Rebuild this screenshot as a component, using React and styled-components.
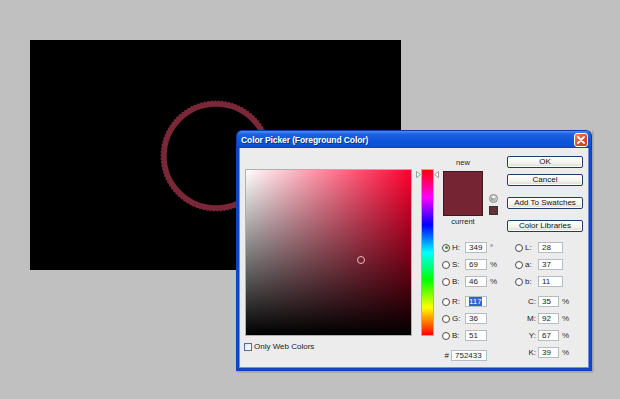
import styled, { createGlobalStyle } from 'styled-components';

const GlobalStyle = createGlobalStyle`
  *, *::before, *::after { box-sizing: border-box; }
  html, body { margin: 0; padding: 0; }
  body {
    background: #c0c0c0;
    font-family: "Liberation Sans", Arial, sans-serif;
  }
`;

const Desktop = styled.div`
  position: relative;
  width: 620px;
  height: 399px;
  overflow: hidden;
  background: #c0c0c0;
`;

const Canvas = styled.div`
  position: absolute;
  left: 30px;
  top: 40px;
  width: 371px;
  height: 230px;
  background: #000;

  svg { display: block; }
`;

const Dialog = styled.div`
  position: absolute;
  left: 236px;
  top: 130px;
  width: 356px;
  display: flex;
  flex-direction: column;
  box-shadow: 1px 1px 2px rgba(0, 0, 0, 0.25);
`;

const TitleBar = styled.div`
  height: 18px;
  display: flex;
  align-items: center;
  justify-content: space-between;
  padding: 0 3px 0 4px;
  border-radius: 6px 6px 0 0;
  background: linear-gradient(to bottom, #4a90f0 0%, #1f62e0 18%, #0d55dc 55%, #0a52d6 85%, #0843b8 100%);
  border: 1px solid #0a3aa8;
  border-bottom: none;
`;

const Title = styled.span`
  color: #fff;
  font-size: 8.5px;
  font-weight: 700;
  letter-spacing: -0.1px;
  text-shadow: 1px 1px 0 #0a2f8a;
`;

const CloseButton = styled.div`
  width: 14px;
  height: 14px;
  border: 1px solid #fff;
  border-radius: 3px;
  background: linear-gradient(135deg, #f08a68 0%, #e0562c 45%, #c63c14 100%);
  display: flex;
  align-items: center;
  justify-content: center;
`;

const Body = styled.div`
  height: 223px;
  display: flex;
  padding: 8px 6px 0 6px;
  background: #ececec;
  border: 3px solid #1042cc;
  border-top: none;
  box-shadow: inset 1px 0 0 #6f8fe8, inset -1px 0 0 #6f8fe8, inset 0 -1px 0 #6f8fe8;
  font-size: 8px;
  color: #000;
`;

const LeftCol = styled.div`
  margin-top: 13px;
  display: flex;
  flex-direction: column;
`;

const Field = styled.div`
  position: relative;
  width: 167px;
  height: 167px;
  border: 1px solid #b0b0b0;
  background:
    linear-gradient(to top, #000, rgba(0, 0, 0, 0)),
    linear-gradient(to right, #fff, ${p => `hsl(${p.$hue}, 100%, 50%)`});
`;

const FieldMarker = styled.div`
  position: absolute;
  left: ${p => p.$x}px;
  top: ${p => p.$y}px;
  width: 8px;
  height: 8px;
  margin: -4px 0 0 -4px;
  border: 1px solid #f0b8c4;
  border-radius: 50%;
`;

const CheckRow = styled.label`
  margin-top: 7px;
  margin-left: -1px;
  display: flex;
  align-items: center;
  gap: 2px;
  height: 8px;
  line-height: 8px;
  color: #222;
`;

const CheckBox = styled.span`
  width: 8px;
  height: 8px;
  border: 1px solid #4d6f9a;
  background: linear-gradient(135deg, #dfe3ea, #fff);
`;

const HueCol = styled.div`
  position: relative;
  margin: 13px 0 0 4px;
  width: 22px;
  height: 167px;
`;

const HueSlider = styled.div`
  margin-left: 5px;
  width: 13px;
  height: 167px;
  border: 1px solid #b0b0b0;
  background: linear-gradient(to bottom, #f00 0%, #f0f 16.67%, #00f 33.33%, #0ff 50%, #0f0 66.67%, #ff0 83.33%, #f00 100%);
`;

const HueArrow = styled.svg`
  position: absolute;
  top: ${p => p.$y - 3}px;
  ${p => (p.$side === 'left' ? 'left: 0;' : 'right: -1px;')}
`;

const RightArea = styled.div`
  flex: 1;
  margin-left: 4px;
  display: flex;
  flex-direction: column;
`;

const TopRow = styled.div`
  display: flex;
  justify-content: space-between;
`;

const SwatchBlock = styled.div`
  display: flex;
  flex-direction: column;
  margin-top: 2px;
  padding-left: 1px;
`;

const SwatchLabel = styled.div`
  width: 40px;
  text-align: center;
  font-size: 7.5px;
  line-height: 10px;
  color: #222;
`;

const SwatchRow = styled.div`
  display: flex;
  gap: 6px;
  margin: 3px 0 1px;
`;

const Swatch = styled.div`
  width: 40px;
  height: 45px;
  border: 1px solid #3a1a20;
  display: flex;
  flex-direction: column;
`;

const SwatchHalf = styled.div`
  flex: 1;
  background: ${p => p.$color};
`;

const SideIcons = styled.div`
  display: flex;
  flex-direction: column;
  justify-content: flex-end;
  gap: 3px;
  padding-bottom: 1px;
`;

const WebSwatch = styled.div`
  width: 9px;
  height: 9px;
  border: 1px solid #333;
  background: ${p => p.$color};
`;

const ButtonCol = styled.div`
  width: 76px;
  display: flex;
  flex-direction: column;
`;

const Button = styled.button`
  height: 12px;
  margin: ${p => p.$gap}px 0 0;
  padding: 0;
  border: 1px solid #1d3c6e;
  border-radius: 2px;
  background: linear-gradient(to bottom, #ffffff 0%, #f4f3ee 60%, #dcd8cc 100%);
  box-shadow: inset 0 0 0 1px #fff;
  font-family: "Liberation Sans", Arial, sans-serif;
  font-size: 8px;
  line-height: 10px;
  color: #111;
`;

const Fields = styled.div`
  margin-top: 10px;
  display: grid;
  grid-template-columns: 73px 1fr;
`;

const FieldCol = styled.div`
  display: flex;
  flex-direction: column;
`;

const Row = styled.div`
  display: flex;
  align-items: center;
  height: 11px;
  margin-top: ${p => p.$gap}px;
`;

const Radio = styled.span`
  position: relative;
  width: 8px;
  height: 8px;
  margin-right: 2px;
  border: 1px solid #4a4a4a;
  border-radius: 50%;
  background: #fff;

  ${p => p.$checked && `
    &::after {
      content: '';
      position: absolute;
      left: 1.5px;
      top: 1.5px;
      width: 3px;
      height: 3px;
      border-radius: 50%;
      background: #2a9d2a;
    }
  `}
`;

const Label = styled.span`
  width: ${p => p.$w}px;
  text-align: ${p => p.$align || 'left'};
  padding-right: ${p => (p.$align === 'right' ? 2 : 0)}px;
  color: #222;
`;

const Input = styled.div`
  width: ${p => p.$w}px;
  height: 11px;
  padding-left: 3px;
  border: 1px solid #b4bcc6;
  background: #fff;
  line-height: 9px;
  color: #222;
`;

const Selected = styled.span`
  background: #3164c5;
  color: #fff;
`;

const Unit = styled.span`
  margin-left: 3px;
  color: #333;
`;

const hsb = [
  { key: 'H', value: '349', unit: '°', checked: true },
  { key: 'S', value: '69', unit: '%' },
  { key: 'B', value: '46', unit: '%' },
];
const rgb = [
  { key: 'R', value: '117', selected: true },
  { key: 'G', value: '36' },
  { key: 'B', value: '51' },
];
const lab = [
  { key: 'L', value: '28' },
  { key: 'a', value: '37' },
  { key: 'b', value: '11' },
];
const cmyk = [
  { key: 'C', value: '35' },
  { key: 'M', value: '92' },
  { key: 'Y', value: '67' },
  { key: 'K', value: '39' },
];

const color = '#752433';
const hue = 349;
const sat = 69;
const bri = 46;
const size = 167;

const Ring = () => (
  <svg width="371" height="230" viewBox="0 0 371 230">
    <circle cx="186" cy="116" r="52" fill="none" stroke="#7a2838" strokeWidth="5.4" />
    <circle cx="186" cy="116" r="54.5" fill="none" stroke="#7a2838" strokeWidth="2.2"
      strokeDasharray="0.1 3.4" strokeLinecap="round" />
  </svg>
);

const Arrow = ({ side, y }) => (
  <HueArrow $side={side} $y={y} width="5" height="7" viewBox="0 0 5 7">
    {side === 'left'
      ? <path d="M0.5 0.5 L4.5 3.5 L0.5 6.5 Z" fill="#fff" stroke="#9a9a9a" strokeWidth="1" />
      : <path d="M4.5 0.5 L0.5 3.5 L4.5 6.5 Z" fill="#fff" stroke="#9a9a9a" strokeWidth="1" />}
  </HueArrow>
);

const Cube = () => (
  <svg width="9" height="9" viewBox="0 0 9 9">
    <circle cx="4.5" cy="4.5" r="4" fill="#cfcfcf" stroke="#8a8a8a" strokeWidth="1" />
    <path d="M4.5 1.8 L7 3.2 L4.5 4.6 L2 3.2 Z" fill="#f4f4f4" />
    <path d="M2 3.2 L4.5 4.6 L4.5 7.3 L2 5.9 Z" fill="#9b9b9b" />
    <path d="M7 3.2 L4.5 4.6 L4.5 7.3 L7 5.9 Z" fill="#b8b8b8" />
  </svg>
);

export default function App() {
  return (
    <Desktop>
      <GlobalStyle />
      <Canvas>
        <Ring />
      </Canvas>

      <Dialog>
        <TitleBar>
          <Title>Color Picker (Foreground Color)</Title>
          <CloseButton>
            <svg width="8" height="8" viewBox="0 0 8 8">
              <path d="M1 1 L7 7 M7 1 L1 7" stroke="#fff" strokeWidth="1.8" strokeLinecap="round" />
            </svg>
          </CloseButton>
        </TitleBar>

        <Body>
          <LeftCol>
            <Field $hue={hue}>
              <FieldMarker $x={(sat / 100) * size} $y={(1 - bri / 100) * size} />
            </Field>
            <CheckRow>
              <CheckBox />
              Only Web Colors
            </CheckRow>
          </LeftCol>

          <HueCol>
            <Arrow side="left" y={(1 - hue / 360) * size} />
            <HueSlider />
            <Arrow side="right" y={(1 - hue / 360) * size} />
          </HueCol>

          <RightArea>
            <TopRow>
              <SwatchBlock>
                <SwatchLabel>new</SwatchLabel>
                <SwatchRow>
                  <Swatch>
                    <SwatchHalf $color={color} />
                    <SwatchHalf $color={color} />
                  </Swatch>
                  <SideIcons>
                    <Cube />
                    <WebSwatch $color="#663333" />
                  </SideIcons>
                </SwatchRow>
                <SwatchLabel>current</SwatchLabel>
              </SwatchBlock>

              <ButtonCol>
                <Button $gap={0}>OK</Button>
                <Button $gap={6}>Cancel</Button>
                <Button $gap={11}>Add To Swatches</Button>
                <Button $gap={11}>Color Libraries</Button>
              </ButtonCol>
            </TopRow>

            <Fields>
              <FieldCol>
                {hsb.map((f, i) => (
                  <Row key={f.key} $gap={i === 0 ? 0 : 6}>
                    <Radio $checked={f.checked} />
                    <Label $w={13}>{f.key}:</Label>
                    <Input $w={22}>{f.value}</Input>
                    <Unit>{f.unit}</Unit>
                  </Row>
                ))}
                {rgb.map((f, i) => (
                  <Row key={f.key} $gap={i === 0 ? 9 : 6}>
                    <Radio />
                    <Label $w={13}>{f.key}:</Label>
                    <Input $w={22}>
                      {f.selected ? <Selected>{f.value}</Selected> : f.value}
                    </Input>
                  </Row>
                ))}
                <Row $gap={9}>
                  <Label $w={9} $align="right">#</Label>
                  <Input $w={36}>752433</Input>
                </Row>
              </FieldCol>

              <FieldCol>
                {lab.map((f, i) => (
                  <Row key={f.key} $gap={i === 0 ? 0 : 6}>
                    <Radio />
                    <Label $w={13}>{f.key}:</Label>
                    <Input $w={25}>{f.value}</Input>
                  </Row>
                ))}
                {cmyk.map((f, i) => (
                  <Row key={f.key} $gap={i === 0 ? 9 : 6}>
                    <Label $w={23} $align="right">{f.key}:</Label>
                    <Input $w={21}>{f.value}</Input>
                    <Unit>%</Unit>
                  </Row>
                ))}
              </FieldCol>
            </Fields>
          </RightArea>
        </Body>
      </Dialog>
    </Desktop>
  );
}
